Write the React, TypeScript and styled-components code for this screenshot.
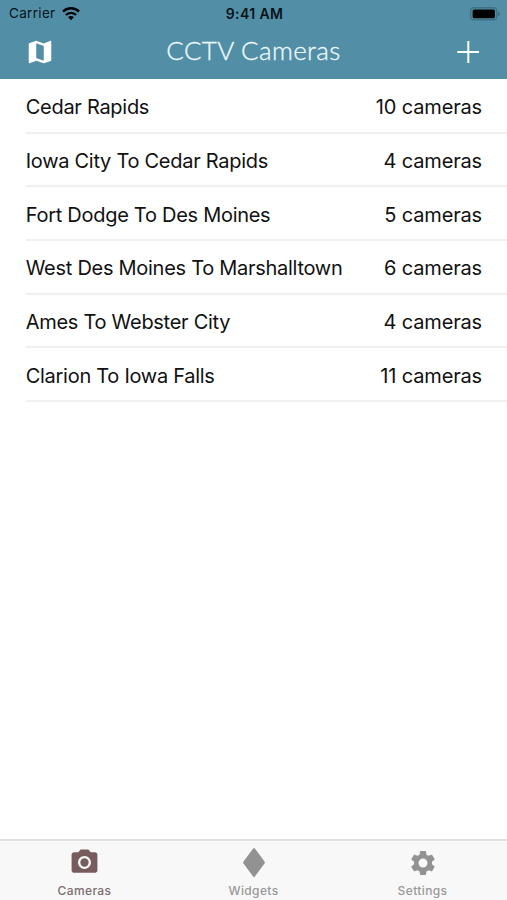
import React from "react";
import styled, { createGlobalStyle } from "styled-components";
import { MdCameraAlt, MdMap, MdSettings } from "react-icons/md";

const GlobalStyle = createGlobalStyle`
  * { box-sizing: border-box; }
  body { margin: 0; background: #fff; font-family: Inter, "Liberation Sans", sans-serif; }
  button { border: 0; padding: 0; background: none; font: inherit; color: inherit; }
`;

const Screen = styled.div`
  display: flex;
  flex-direction: column;
  width: 507px;
  height: 900px;
  overflow: hidden;
  background: #fff;
`;

const Header = styled.header`
  flex: none;
  height: 79px;
  background: #528fa6;
`;

const StatusBar = styled.div`
  display: grid;
  grid-template-columns: 1fr auto 1fr;
  align-items: center;
  height: 27px;
  padding: 0 7px 0 9px;
  color: #07131a;
  font-size: 13.5px;
  line-height: 27px;
`;

const Carrier = styled.div`
  display: flex;
  align-items: center;
  gap: 6px;
  letter-spacing: 0.32px;
`;

const Clock = styled.div`
  font-size: 14px;
  font-weight: 600;
  letter-spacing: 0.4px;
`;

const Battery = styled.div`
  display: flex;
  justify-content: flex-end;
`;

const NavBar = styled.div`
  display: grid;
  grid-template-columns: 60px 1fr 60px;
  align-items: center;
  height: 50px;
  color: #fff;
`;

const NavButton = styled.button<{ $side: "left" | "right" }>`
  display: flex;
  justify-content: ${(p) => (p.$side === "left" ? "flex-start" : "flex-end")};
  padding: ${(p) => (p.$side === "left" ? "0 0 0 25px" : "0 28px 0 0")};
`;

const Title = styled.h1`
  margin: 0;
  padding-bottom: 3px;
  font: 300 26px/47px Lato, sans-serif;
  letter-spacing: 0.34px;
  text-align: center;
  color: #eefafa;
  -webkit-text-stroke: 0.3px #eefafa;
  white-space: nowrap;
`;

const List = styled.ul`
  flex: 1;
  margin: 0;
  padding: 0 0 0 26px;
  list-style: none;
`;

const Row = styled.li`
  display: flex;
  justify-content: space-between;
  align-items: center;
  height: 53.7px;
  padding: 3px 25px 0 0;
  border-bottom: 2px solid #f0f0f0;
  color: #111;
  font-size: 20px;
  white-space: nowrap;

  &:first-child {
    height: 54.6px;
  }
`;

const Place = styled.span`
  margin-left: -0.3px;
  letter-spacing: -0.28px;
`;

const Count = styled.span`
  letter-spacing: -0.16px;
`;

const TabBar = styled.nav`
  flex: none;
  display: grid;
  grid-template-columns: repeat(3, 1fr);
  height: 61px;
  border-top: 2px solid #e1e1e1;
  background: #f8f8f8;
`;

const Tab = styled.button<{ $active?: boolean }>`
  display: flex;
  flex-direction: column;
  align-items: center;
  color: ${(p) => (p.$active ? "#775b5d" : "#929292")};
`;

const TabIcon = styled.span`
  display: flex;
  align-items: center;
  justify-content: center;
  height: 43px;
`;

const TabLabel = styled.span<{ $active?: boolean }>`
  font-size: 12px;
  font-weight: 500;
  line-height: 14px;
  letter-spacing: 0.38px;
  color: ${(p) => (p.$active ? "#7b6e6f" : "#999")};
`;

const routes = [
  { name: "Cedar Rapids", cameras: 10 },
  { name: "Iowa City To Cedar Rapids", cameras: 4 },
  { name: "Fort Dodge To Des Moines", cameras: 5 },
  { name: "West Des Moines To Marshalltown", cameras: 6 },
  { name: "Ames To Webster City", cameras: 4 },
  { name: "Clarion To Iowa Falls", cameras: 11 },
];

const WifiIcon = () => (
  <svg width="18" height="14" viewBox="0 0 18 14" fill="none" stroke="#000" strokeWidth="2.4">
    <path d="M1 4.6C5.4.1 12.6.1 17 4.6" />
    <path d="M3.9 8c2.8-2.9 7.4-2.9 10.2 0" />
    <path d="M9 13.2l-2.9-3c1.6-1.6 4.2-1.6 5.8 0z" fill="#000" stroke="none" />
  </svg>
);

const BatteryIcon = () => (
  <svg width="30" height="14" viewBox="0 0 30 14">
    <rect x=".7" y=".7" width="26" height="12.1" rx="3.4" fill="none" stroke="#3f7184" strokeWidth="1.4" />
    <rect x="2.6" y="2.4" width="22.3" height="8.8" rx="1.5" fill="#000" />
    <path d="M28.2 4.5c2 .7 2 3.7 0 4.4z" fill="#356273" />
  </svg>
);

const PlusIcon = () => (
  <svg width="22" height="22" viewBox="0 0 22 22" stroke="#fff" strokeWidth="2">
    <path d="M11.3 0v22M.3 11h22" />
  </svg>
);

const DiamondIcon = () => (
  <svg width="22" height="29" viewBox="0 0 22 29" fill="currentColor">
    <path d="M10.1.6Q11-.4 11.9.6L21.5 13.4Q22.2 14.5 21.5 15.6L11.9 28.4Q11 29.4 10.1 28.4L.5 15.6Q-.2 14.5.5 13.4Z" />
  </svg>
);

export default function App() {
  return (
    <Screen>
      <GlobalStyle />
      <Header>
        <StatusBar>
          <Carrier>
            Carrier
            <WifiIcon />
          </Carrier>
          <Clock>9:41 AM</Clock>
          <Battery>
            <BatteryIcon />
          </Battery>
        </StatusBar>
        <NavBar>
          <NavButton $side="left" aria-label="Map">
            <MdMap size={30} />
          </NavButton>
          <Title>CCTV Cameras</Title>
          <NavButton $side="right" aria-label="Add">
            <PlusIcon />
          </NavButton>
        </NavBar>
      </Header>
      <List>
        {routes.map((route) => (
          <Row key={route.name}>
            <Place>{route.name}</Place>
            <Count>{route.cameras} cameras</Count>
          </Row>
        ))}
      </List>
      <TabBar>
        <Tab $active>
          <TabIcon>
            <MdCameraAlt size={31} />
          </TabIcon>
          <TabLabel $active>Cameras</TabLabel>
        </Tab>
        <Tab>
          <TabIcon>
            <DiamondIcon />
          </TabIcon>
          <TabLabel>Widgets</TabLabel>
        </Tab>
        <Tab>
          <TabIcon>
            <MdSettings size={30} />
          </TabIcon>
          <TabLabel>Settings</TabLabel>
        </Tab>
      </TabBar>
    </Screen>
  );
}
